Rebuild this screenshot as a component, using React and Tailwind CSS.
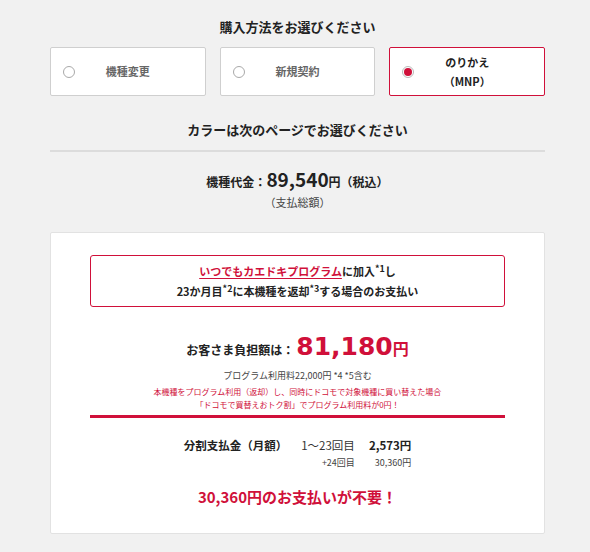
const methods = [
  { id: 'change', label: '機種変更' },
  { id: 'new', label: '新規契約' },
  { id: 'mnp', label: 'のりかえ', sub: '（MNP）' },
];

function MethodButton({ label, sub, selected }) {
  return (
    <div
      className={`relative flex h-[49px] items-center justify-center rounded-[2px] bg-white ${
        selected ? 'border-[1.5px] border-[#d0103a]' : 'border border-[#cfcfcf]'
      }`}
    >
      <span
        className={`absolute left-[12px] top-1/2 flex h-[12px] w-[12px] -translate-y-1/2 items-center justify-center rounded-full border ${
          selected ? 'border-[#b9b9b9]' : 'border-[#a9a9a9]'
        }`}
      >
        {selected && <span className="h-[8px] w-[8px] rounded-full bg-[#d0103a]" />}
      </span>
      <div
        className={`text-center text-[11px] font-bold leading-[19px] ${
          selected ? 'text-[#222]' : 'text-[#666]'
        }`}
      >
        <div>{label}</div>
        {sub && <div>{sub}</div>}
      </div>
    </div>
  );
}

export default function App() {
  return (
    <div className="h-[552px] w-[590px] overflow-hidden bg-[#f1f1f1] font-['Noto_Sans_CJK_JP','Noto_Sans',sans-serif] text-[#222]">
      <div className="ml-[50px] w-[495px] pt-[18px]">
        <h2 className="text-center text-[13px] font-bold leading-[18px]">購入方法をお選びください</h2>

        <div className="mt-[11px] grid grid-cols-3 gap-[14px]">
          {methods.map((m) => (
            <MethodButton key={m.id} label={m.label} sub={m.sub} selected={m.id === 'mnp'} />
          ))}
        </div>

        <h2 className="mt-[24px] text-center text-[13px] font-bold leading-[20px]">
          カラーは次のページでお選びください
        </h2>
        <div className="mt-[10px] h-[2px] bg-[#dcdcdc]" />

        <div className="mt-[15px] text-center">
          <p className="text-[12px] font-bold leading-[24px]">
            機種代金：<span className="text-[19px]">89,540</span>円（税込）
          </p>
          <p className="mt-[-1px] text-[11px] leading-[18px] text-[#444]">（支払総額）</p>
        </div>

        <section className="mt-[21px] h-[302px] rounded-[2px] border border-[#e2e2e2] bg-white px-[39px] pt-[22px]">
          <div className="rounded-[3px] border border-[#d0103a] py-[5px] text-center text-[11px] font-bold leading-[20px]">
            <p>
              <span className="text-[#d0103a] underline underline-offset-2">いつでもカエドキプログラム</span>
              に加入<sup className="text-[9px]">*1</sup>し
            </p>
            <p>
              23か月目<sup className="text-[9px]">*2</sup>に本機種を返却
              <sup className="text-[9px]">*3</sup>する場合のお支払い
            </p>
          </div>

          <div className="mt-[22px] text-center">
            <p className="flex items-baseline justify-center text-[12px] font-bold">
              お客さま負担額は：
              <span className="ml-[2px] font-['DejaVu_Sans',sans-serif] text-[25px] leading-[36px] text-[#d0103a]">
                81,180
              </span>
              <span className="text-[16px] text-[#d0103a]">円</span>
            </p>
            <p className="mt-[4px] text-[9px] leading-[14px] text-[#444]">プログラム利用料22,000円 *4 *5含む</p>
            <p className="mt-[2px] text-[8px] leading-[13px] text-[#d0103a]">
              本機種をプログラム利用（返却）し、同時にドコモで対象機種に買い替えた場合
            </p>
            <p className="text-[8px] leading-[13px] text-[#d0103a]">
              「ドコモで買替えおトク割」でプログラム利用料が0円！
            </p>
          </div>

          <div className="mt-[4px] h-[3px] bg-[#d0103a]" />

          <div className="mt-[17px] flex justify-center">
            <div className="grid grid-cols-[auto_auto_auto] items-baseline gap-x-[14px]">
              <span className="text-[11.5px] font-bold leading-[20px]">分割支払金（月額）</span>
              <span className="text-[11.5px] leading-[20px] text-[#333]">1〜23回目</span>
              <span className="text-[11.5px] font-bold leading-[20px]">2,573円</span>
              <span />
              <span className="text-right text-[9px] leading-[16px] text-[#444]">+24回目</span>
              <span className="text-right text-[9px] leading-[16px] text-[#444]">30,360円</span>
            </div>
          </div>

          <p className="mt-[15px] text-center text-[15px] font-bold text-[#d0103a]">30,360円のお支払いが不要！</p>
        </section>
      </div>
    </div>
  );
}
